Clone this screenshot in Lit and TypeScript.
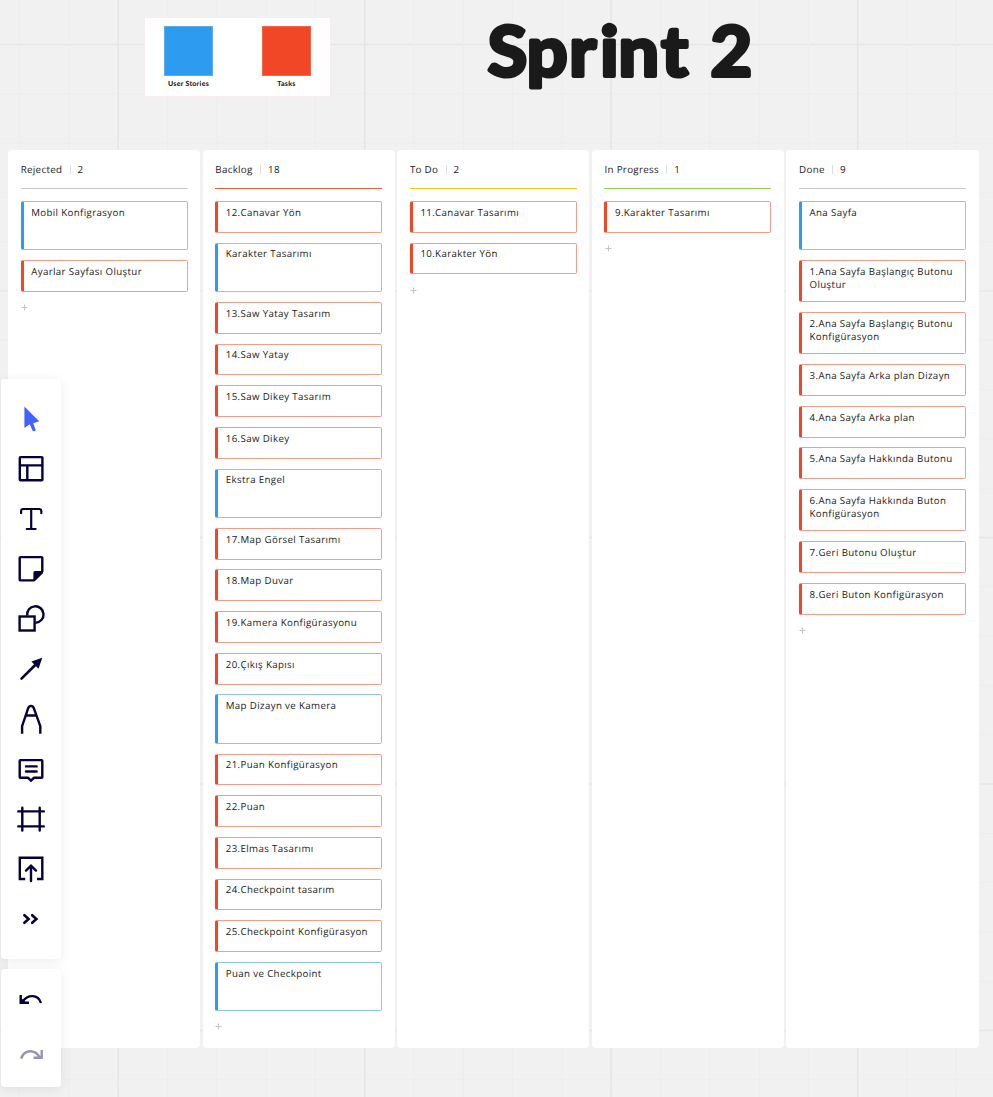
import { LitElement, html, css, svg } from "lit";
import { customElement, property } from "lit/decorators.js";

type Card = [kind: "s" | "t", text: string, lines?: number];
interface Column { title: string; tone: string; cards: Card[]; }

const columns: Column[] = [
  { title: "Rejected", tone: "gray", cards: [["s", "Mobil Konfigrasyon"], ["t", "Ayarlar Sayfası Oluştur"]] },
  {
    title: "Backlog", tone: "red", cards: [
      ["t", "12.Canavar Yön"], ["s", "Karakter Tasarımı"], ["t", "13.Saw Yatay Tasarım"], ["t", "14.Saw Yatay"],
      ["t", "15.Saw Dikey Tasarım"], ["t", "16.Saw Dikey"], ["s", "Ekstra Engel"], ["t", "17.Map Görsel Tasarımı"],
      ["t", "18.Map Duvar"], ["t", "19.Kamera Konfigürasyonu"], ["t", "20.Çıkış Kapısı"], ["s", "Map Dizayn ve Kamera"],
      ["t", "21.Puan Konfigürasyon"], ["t", "22.Puan"], ["t", "23.Elmas Tasarımı"], ["t", "24.Checkpoint tasarım"],
      ["t", "25.Checkpoint Konfigürasyon"], ["s", "Puan ve Checkpoint"],
    ],
  },
  { title: "To Do", tone: "yellow", cards: [["t", "11.Canavar Tasarımı"], ["t", "10.Karakter Yön"]] },
  { title: "In Progress", tone: "green", cards: [["t", "9.Karakter Tasarımı"]] },
  {
    title: "Done", tone: "gray", cards: [
      ["s", "Ana Sayfa"], ["t", "1.Ana Sayfa Başlangıç Butonu Oluştur", 2], ["t", "2.Ana Sayfa Başlangıç Butonu Konfigürasyon", 2],
      ["t", "3.Ana Sayfa Arka plan Dizayn"], ["t", "4.Ana Sayfa Arka plan"], ["t", "5.Ana Sayfa Hakkında Butonu"],
      ["t", "6.Ana Sayfa Hakkında Buton Konfigürasyon", 2], ["t", "7.Geri Butonu Oluştur"], ["t", "8.Geri Buton Konfigürasyon"],
    ],
  },
];

@customElement("board-column")
class BoardColumn extends LitElement {
  @property({ attribute: false }) column!: Column;
  static styles = css`
    :host { display: block; box-sizing: border-box; background: #fff; border-radius: 4px; padding: 0 12.7px; height: 898px; color: #1a1a1a; }
    .head { display: flex; align-items: center; height: 38px; padding-top: 1px; box-sizing: border-box; font-size: 9.8px; letter-spacing: 0.3px; }
    .sep { width: 1px; height: 9px; background: #dedede; margin: 0 7px 0 7.3px; }
    .rule { height: 1px; margin-bottom: 12px; }
    .gray { background-color: #c9c9c9; }
    .red { background-color: #f45a3c; }
    .yellow { background-color: #fac710; }
    .green { background-color: #8fd14f; }
    .cards { display: flex; flex-direction: column; gap: 9.87px; }
    .card { box-sizing: border-box; height: 31.8px; border: 1px solid #f59d8b; border-left: 3px solid #f24726; border-radius: 2px; padding: 3.8px 2px 0 7.5px; font-size: 9.7px; line-height: 13px; letter-spacing: 0.37px; }
    .s { height: 49.4px; border-color: #8bc6f3; border-left-color: #2d9bf0; }
    .two { height: 42.1px; }
    .plus { display: block; margin: 12.1px 0 0 0.1px; width: 7px; height: 7px; }
  `;
  render() {
    const c = this.column;
    return html`
      <div class="head"><span>${c.title}</span><span class="sep"></span><span>${c.cards.length}</span></div>
      <div class="rule ${c.tone}"></div>
      <div class="cards">${c.cards.map(([k, text, n]) => html`<div class="card ${k} ${n ? "two" : ""}">${text}</div>`)}</div>
      <svg class="plus" viewBox="0 0 7 7"><path d="M3.5 0.5v6M0.5 3.5h6" stroke="#c4c4c4" stroke-width="1" /></svg>`;
  }
}

const tools = [
  svg`<path d="M23.4 12.4V33.9L28.8 30.3L31.2 36Q32.2 37.8 33.8 36.9Q35 36.2 34.4 34.9L32.2 29.2L38.2 27.3Z" fill="#4262ff" stroke="none"/>`,
  svg`<rect x="18.8" y="13.1" width="22.6" height="23.2" rx="0.6"/><path d="M18.8 21.4H41.4M26.3 21.4V36.3"/>`,
  svg`<path d="M20.1 19.2V17Q20.1 15 22.1 15H38.3Q40.3 15 40.3 17V19.2M30.2 15V35M25.8 35H34.6" stroke-width="2.2" stroke-linecap="round"/>`,
  svg`<path d="M41.3 28V13.8Q41.3 13.1 40.6 13.1H19.4Q18.7 13.1 18.7 13.8V35.7Q18.7 36.4 19.4 36.4H33L41.3 28.2"/><path d="M32.4 36.8V28.8Q32.4 27 34 27H42V28.4L33.4 37Z" fill="#050038" stroke="none"/>`,
  svg`<rect x="18.6" y="22.5" width="15" height="14"/><path d="M26.2 21.5A8.2 8.2 0 1 1 34.6 28.7"/>`,
  svg`<path d="M20.5 34.6L36 19.3" stroke-width="2.6" stroke-linecap="round"/><path d="M41.3 13.7L30.4 17.5L37.5 24.8Z" fill="#050038" stroke="none"/>`,
  svg`<path d="M21.1 39.8V32.2L27.2 14.2Q28 12 30 12Q32 12 32.8 14.2L39.3 32.2V39.8M25.3 21.5H35.2"/>`,
  svg`<path d="M19.3 16.1H40.7Q41.3 16.1 41.3 16.7V33.2Q41.3 33.8 40.7 33.8H33L30 36.7L27 33.8H19.3Q18.7 33.8 18.7 33.2V16.7Q18.7 16.1 19.3 16.1Z"/><path d="M25 22.4H35.6M25 27.5H35.6" stroke-linecap="round"/>`,
  svg`<path d="M21.3 13.8V36.5M38.7 13.8V36.5M17.3 17.4H42.8M17.3 32.4H42.8" stroke-linecap="round"/>`,
  svg`<path d="M24.2 35H18.8V13.8H41.3V35H36"/><path d="M30 37V22M25 26.6L30 21.7L35 26.6" stroke-linecap="round"/>`,
  svg`<path d="M23.4 21.2L27.6 25L23.4 28.8M31.2 21.2L35.4 25L31.2 28.8" stroke-width="2.6" stroke-linecap="round"/>`,
];
const history = [
  svg`<path d="M21.8 29.3Q25.5 23.9 31.5 24.1Q38 24.4 40 31M19.7 23V30.7H28" stroke-width="2.4"/><path d="M19 25V31.6H26Z" fill="#050038" stroke="none"/>`,
  svg`<g opacity=".42"><path d="M38.6 28.8Q34.9 23.1 28.9 23.2Q22.4 23.5 20.2 30.6M40.7 22V29.8H32.6" stroke-width="2.4"/></g>`,
];

@customElement("app-root")
class AppRoot extends LitElement {
  static styles = css`
    :host { display: block; position: relative; width: 993px; height: 1097px; overflow: hidden; font-family: "Open Sans", "Noto Sans", sans-serif; text-rendering: geometricPrecision; background: #f1f1f1; }
    .grid { position: absolute; inset: 0; }
    .page { position: relative; padding: 17px 0 0 8px; }
    .top { display: flex; height: 133px; align-items: flex-start; }
    .legend { box-sizing: border-box; display: flex; width: 187px; height: 80px; margin-left: 136px; padding: 8px 19px; justify-content: space-between; background: #fff; border: 1px solid #f7efed; }
    .item { width: 49px; display: flex; flex-direction: column; align-items: center; }
    .swatch { box-sizing: border-box; width: 49px; height: 50px; flex: none; }
    .blue { background: #2d9bf0; border: 1px solid #5badec; }
    .orange { background: #f24726; border: 1px solid #f4634a; }
    .label { font: 900 7px/10px Lato, sans-serif; letter-spacing: 0.28px; margin-top: 3px; white-space: nowrap; color: #1a1a1a; }
    .title { margin: -17px 0 0 139px; width: 310px; height: 110px; overflow: visible; }
    .title text { font-family: Lato, sans-serif; font-weight: 700; font-size: 69px; fill: #1a1a1a; stroke: #1a1a1a; stroke-width: 4; stroke-linejoin: round; }
    .board { display: grid; grid-template-columns: repeat(5, 192.3px); column-gap: 2.3px; }
    .bar { position: absolute; left: 1px; width: 60px; box-sizing: border-box; background: #fff; border-radius: 4px; box-shadow: 0 2px 12px rgba(5, 0, 56, 0.08); display: flex; flex-direction: column; }
    .tools { top: 379px; height: 580px; padding-top: 15px; }
    .history { top: 969px; height: 118px; padding-top: 3px; }
    .icon { display: block; fill: none; stroke: #050038; stroke-width: 2.4; flex: none; }
  `;
  render() {
    const lines = [];
    for (let i = 0; i < 23; i++) {
      const p = -4.75 + i * 49.3;
      const x = 19.6 + i * 49.3;
      const my = i % 5 === 1;
      const mx = i % 5 === 2;
      lines.push(svg`<path d="M0 ${p}H993" stroke=${my ? "#e6e6e6" : "#ededed"} stroke-width=${my ? 1.6 : 1} />`);
      lines.push(svg`<path d="M${x} 0V1097" stroke=${mx ? "#e6e6e6" : "#ededed"} stroke-width=${mx ? 1.6 : 1} />`);
    }
    return html`
      <svg class="grid" width="993" height="1097">${lines}</svg>
      <div class="page">
        <div class="top">
          <div class="legend">
            <div class="item"><div class="swatch blue"></div><div class="label">User Stories</div></div>
            <div class="item"><div class="swatch orange"></div><div class="label">Tasks</div></div>
          </div>
          <svg class="title" viewBox="470 0 310 110"><text transform="translate(487 75.7) scale(1.04 1)" y="0" x="0.8 38.3 79 109 126.5 167.5 195 215">Sprint 2</text></svg>
        </div>
        <div class="board">${columns.map((c) => html`<board-column .column=${c}></board-column>`)}</div>
      </div>
      <div class="bar tools">${tools.map((t) => html`<svg class="icon" width="60" height="50">${t}</svg>`)}</div>
      <div class="bar history">${history.map((t) => html`<svg class="icon" width="60" height="56">${t}</svg>`)}</div>`;
  }
}
